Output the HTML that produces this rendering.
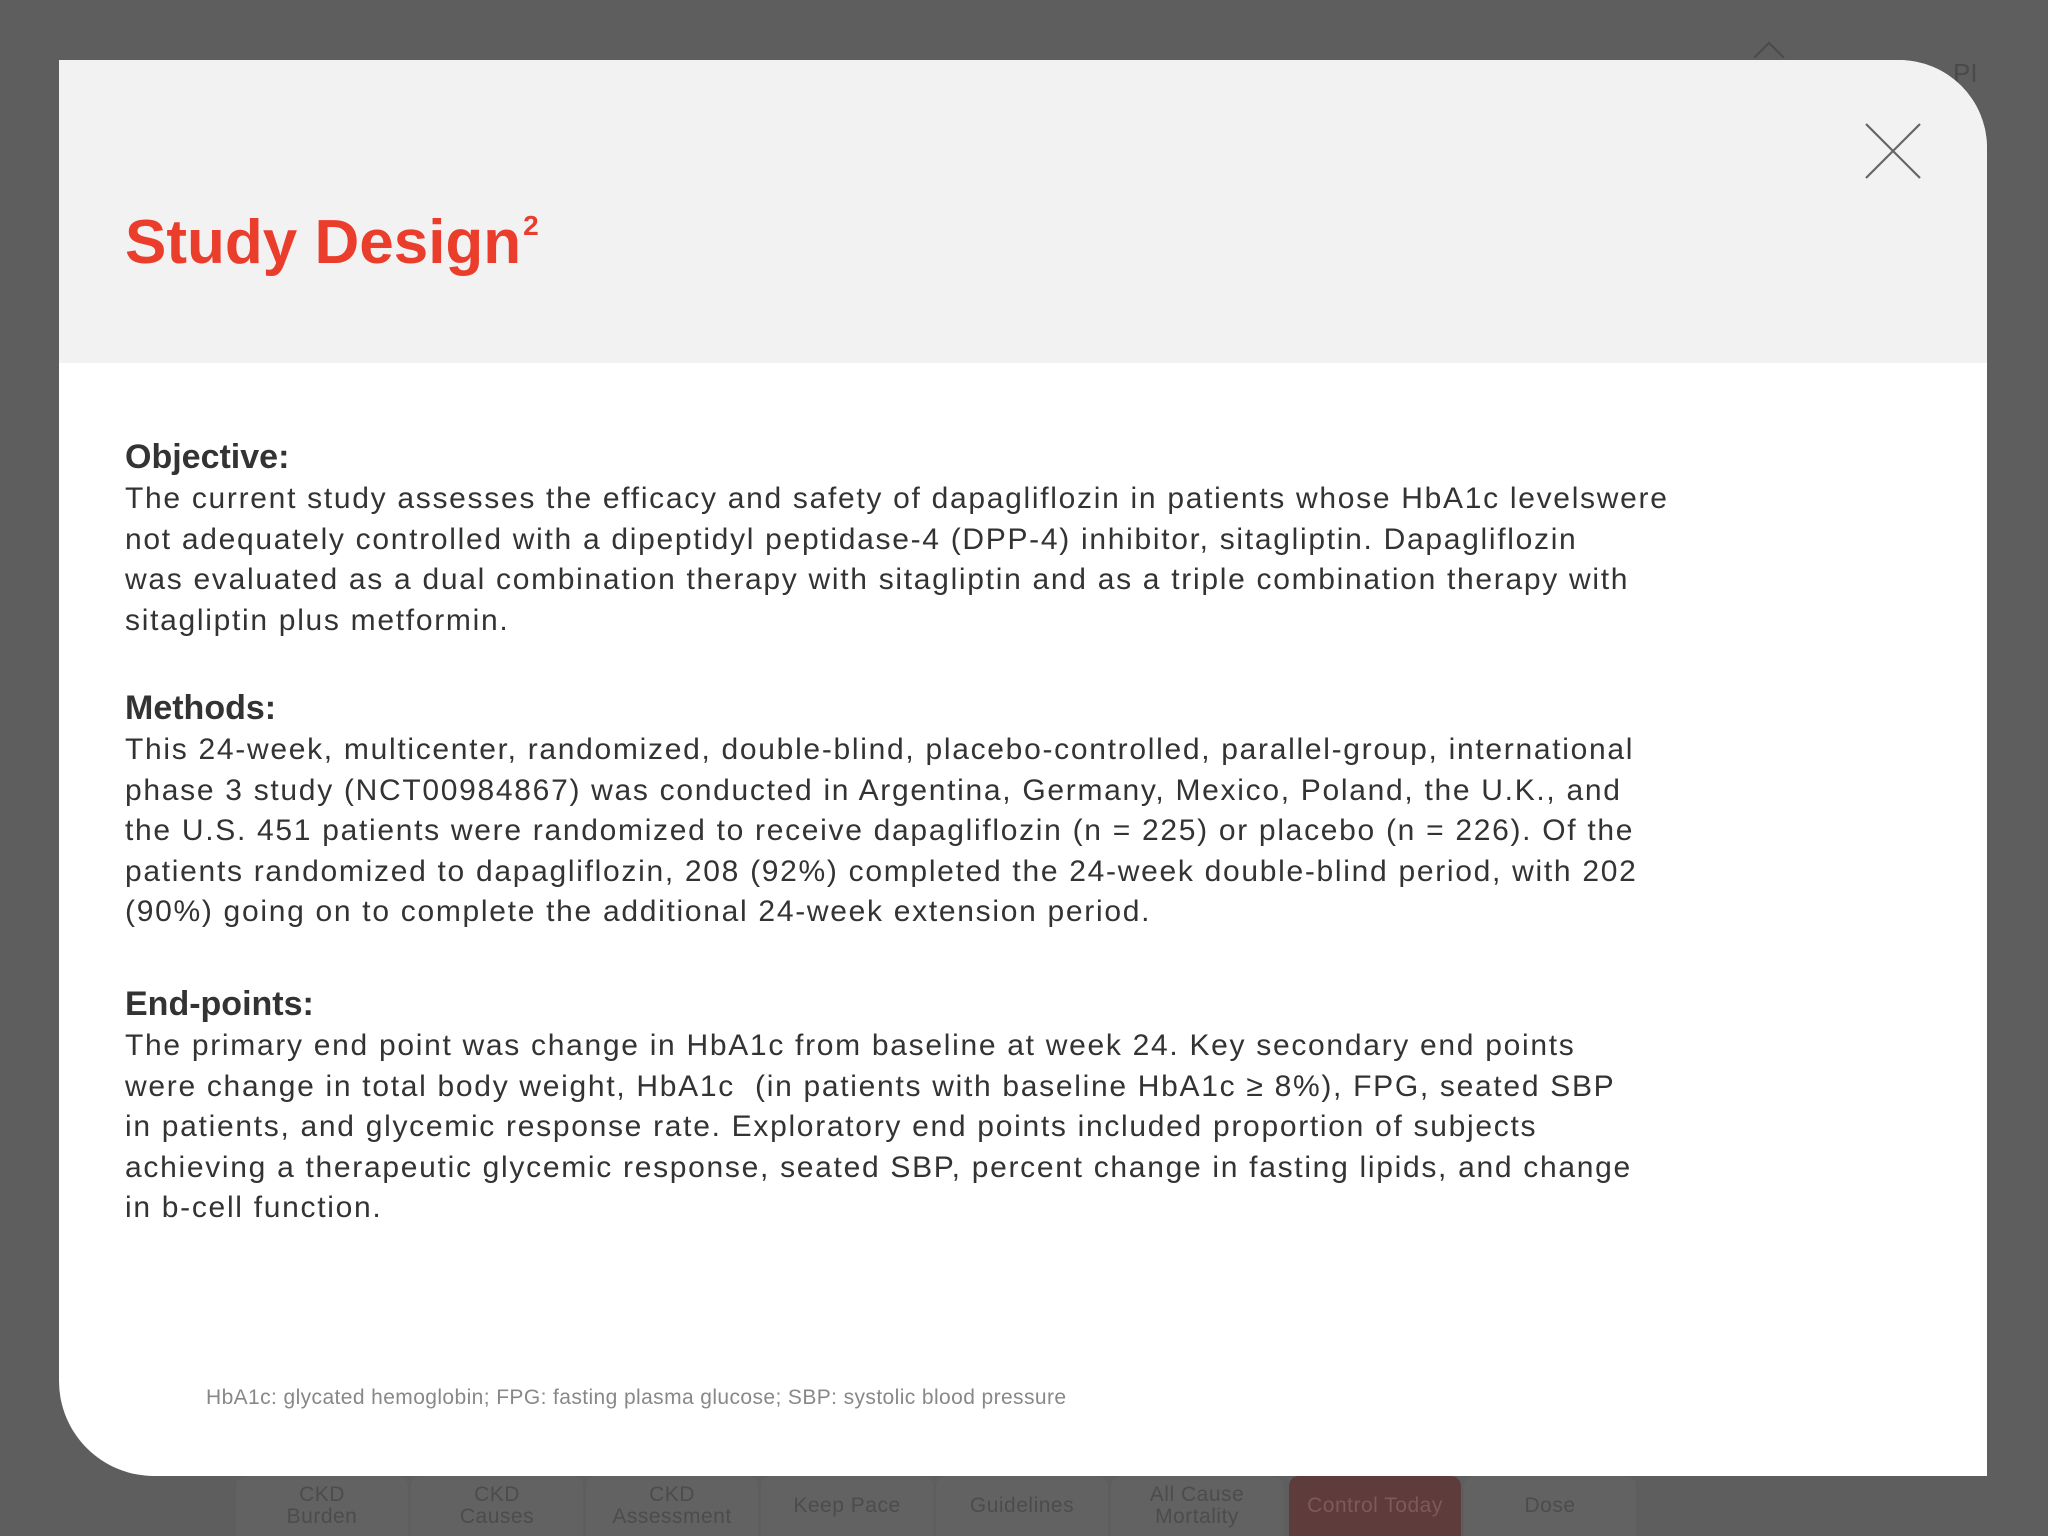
<!DOCTYPE html>
<html><head><meta charset="utf-8"><style>
html,body{margin:0;padding:0}
body{width:2048px;height:1536px;background:#5e5e5e;position:relative;overflow:hidden;font-family:"Liberation Sans",sans-serif}
.modal{position:absolute;left:59px;top:60px;width:1928px;height:1416px;background:#fff;border-top-right-radius:88px;border-bottom-left-radius:95px;overflow:hidden}
.head{position:absolute;left:0;top:0;width:100%;height:303px;background:#f2f2f2}
.title{position:absolute;left:66px;top:152px;font-size:62px;font-weight:bold;color:#ea3d2b;line-height:1}
.title sup{font-size:28px;vertical-align:top;position:relative;top:0px;margin-left:2px}
.x{position:absolute;left:1806px;top:63px}
.sec{position:absolute;left:66px;color:#333;white-space:nowrap}
.sec h3{margin:0;font-size:34px;font-weight:bold;line-height:43px;color:#333}
.sec p{margin:0;font-size:30px;line-height:40.6px;font-weight:normal;letter-spacing:1.7px}
.fn{position:absolute;left:147px;top:1326px;font-size:21px;color:#888;white-space:nowrap;letter-spacing:0.4px}
.tabs{position:absolute;top:1476px;left:236px}
.tab{position:absolute;top:0;width:172px;height:60px;background:#626262;color:#4c4c4c;font-size:21px;text-align:center;display:flex;align-items:center;justify-content:center;line-height:22px;border-radius:10px 10px 0 0;letter-spacing:0.5px}
</style></head><body>
<div style="position:absolute;left:1758px;top:46px;width:20px;height:20px;border-left:2px solid #4a4a4a;border-top:2px solid #4a4a4a;transform:rotate(45deg)"></div>
<div style="position:absolute;left:1953px;top:58px;font-size:26px;color:#4a4a4a">PI</div>
<div class="tabs">
<div class="tab" style="left:0">CKD<br>Burden</div>
<div class="tab" style="left:175px">CKD<br>Causes</div>
<div class="tab" style="left:350px">CKD<br>Assessment</div>
<div class="tab" style="left:525px">Keep Pace</div>
<div class="tab" style="left:700px">Guidelines</div>
<div class="tab" style="left:875px">All Cause<br>Mortality</div>
<div class="tab" style="left:1053px;background:#5f3c3c;color:#7d5959">Control Today</div>
<div class="tab" style="left:1228px">Dose</div>
</div>
<div class="modal">
<div class="head">
<div class="title">Study Design<sup>2</sup></div>
<svg class="x" width="56" height="56" viewBox="0 0 56 56"><path d="M1 1L55 55M55 1L1 55" stroke="#666" stroke-width="2.2" fill="none"/></svg>
</div>
<div class="sec" style="top:376px"><h3>Objective:</h3><p>The current study assesses the efficacy and safety of dapagliflozin in patients whose HbA1c levelswere<br>not adequately controlled with a dipeptidyl peptidase-4 (DPP-4) inhibitor, sitagliptin. Dapagliflozin<br>was evaluated as a dual combination therapy with sitagliptin and as a triple combination therapy with<br>sitagliptin plus metformin.</p></div>
<div class="sec" style="top:627px"><h3>Methods:</h3><p>This 24-week, multicenter, randomized, double-blind, placebo-controlled, parallel-group, international<br>phase 3 study (NCT00984867) was conducted in Argentina, Germany, Mexico, Poland, the U.K., and<br>the U.S. 451 patients were randomized to receive dapagliflozin (n = 225) or placebo (n = 226). Of the<br>patients randomized to dapagliflozin, 208 (92%) completed the 24-week double-blind period, with 202<br>(90%) going on to complete the additional 24-week extension period.</p></div>
<div class="sec" style="top:923px"><h3>End-points:</h3><p>The primary end point was change in HbA1c from baseline at week 24. Key secondary end points<br>were change in total body weight, HbA1c &nbsp;(in patients with baseline HbA1c ≥ 8%), FPG, seated SBP<br>in patients, and glycemic response rate. Exploratory end points included proportion of subjects<br>achieving a therapeutic glycemic response, seated SBP, percent change in fasting lipids, and change<br>in b-cell function.</p></div>
<div class="fn">HbA1c: glycated hemoglobin; FPG: fasting plasma glucose; SBP: systolic blood pressure</div>
</div>
</body></html>
